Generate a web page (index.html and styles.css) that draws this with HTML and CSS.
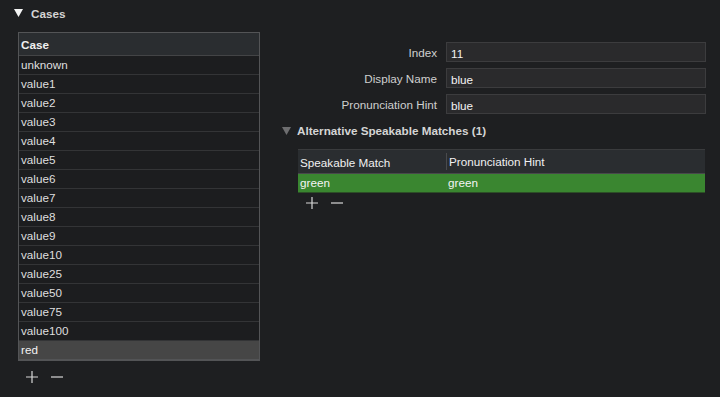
FILE: index.html
```html
<!DOCTYPE html>
<html>
<head>
<meta charset="utf-8">
<title>Cases</title>
<link rel="stylesheet" href="styles.css">
</head>
<body>

	<div class="section-title"><svg class="tri" width="9" height="8" viewBox="0 0 9 8"><path d="M0 0H9L4.5 8Z" fill="#f4f4f4"/></svg>Cases</div>

	<div class="panes">
		<div class="left">
			<div class="table cases">
				<div class="thead"><div class="cell">Case</div></div>
				<div class="row"><div class="cell">unknown</div></div>
				<div class="row"><div class="cell">value1</div></div>
				<div class="row"><div class="cell">value2</div></div>
				<div class="row"><div class="cell">value3</div></div>
				<div class="row"><div class="cell">value4</div></div>
				<div class="row"><div class="cell">value5</div></div>
				<div class="row"><div class="cell">value6</div></div>
				<div class="row"><div class="cell">value7</div></div>
				<div class="row"><div class="cell">value8</div></div>
				<div class="row"><div class="cell">value9</div></div>
				<div class="row"><div class="cell">value10</div></div>
				<div class="row"><div class="cell">value25</div></div>
				<div class="row"><div class="cell">value50</div></div>
				<div class="row"><div class="cell">value75</div></div>
				<div class="row"><div class="cell">value100</div></div>
				<div class="row selected"><div class="cell">red</div></div>
			</div>
			<div class="buttons">
				<svg width="14" height="14" viewBox="0 0 14 14"><path d="M7 1V13M1 7H13" stroke="#d8d8d8" stroke-width="1.2"/></svg>
				<svg width="14" height="14" viewBox="0 0 14 14"><path d="M1 7H13" stroke="#d8d8d8" stroke-width="1.2"/></svg>
			</div>
		</div>

		<div class="right">
			<div class="form">
				<label>Index</label><div class="field">11</div>
				<label>Display Name</label><div class="field">blue</div>
				<label>Pronunciation Hint</label><div class="field">blue</div>
			</div>

			<div class="sub-title"><svg class="tri dim" width="9" height="8" viewBox="0 0 9 8"><path d="M0 0H9L4.5 8Z" fill="#6e6e70"/></svg>Alternative Speakable Matches (1)</div>

			<div class="table matches">
				<div class="thead">
					<div class="cell">Speakable Match</div>
					<div class="cell sep">Pronunciation Hint</div>
				</div>
				<div class="row green">
					<div class="cell">green</div>
					<div class="cell">green</div>
				</div>
			</div>
			<div class="buttons small">
				<svg width="14" height="14" viewBox="0 0 14 14"><path d="M7 1V13M1 7H13" stroke="#d8d8d8" stroke-width="1.2"/></svg>
				<svg width="14" height="14" viewBox="0 0 14 14"><path d="M1 7H13" stroke="#d8d8d8" stroke-width="1.2"/></svg>
			</div>
		</div>
	</div>

</body>
</html>
```

FILE: styles.css
```css
body {
	margin: 0;
	width: 720px;
	height: 397px;
	background-color: #1e1f21;
	color: #dfdfdf;
	font-family: "Liberation Sans", Arial, sans-serif;
	font-size: 11.7px;
	overflow: hidden;
}

.section-title {
	display: flex;
	align-items: center;
	height: 14px;
	padding: 6px 0 0 14px;
	font-weight: bold;
	color: #d4d4d4;
}

.tri {
	margin-right: 8px;
}

.tri.dim {
	margin-right: 6px;
}

.panes {
	display: flex;
	padding-top: 12px;
}

.left {
	margin-left: 18px;
	width: 242px;
}

.table {
	box-sizing: border-box;
	border: 1px solid #535456;
	border-bottom-width: 2px;
}

.thead {
	display: flex;
	height: 22px;
	background-color: #2a2d30;
	border-bottom: 1px solid #434446;
	font-weight: bold;
	color: #f0f0f0;
}

.row {
	display: flex;
	height: 18px;
	background-color: #1c1d1f;
	border-bottom: 1px solid #333436;
}

.row:last-child {
	border-bottom: none;
}

.cell {
	display: flex;
	align-items: center;
	padding-left: 2px;
	padding-bottom: 1px;
	flex: 1;
}

.thead .cell {
	padding-top: 1px;
	padding-bottom: 0;
}

.row.selected {
	background-color: #464646;
	color: #f2f2f2;
}

.buttons {
	display: flex;
	gap: 11px;
	padding: 9px 0 0 7px;
}

.buttons.small {
	padding: 3px 0 0 25px;
}

.right {
	margin-left: 20px;
	width: 427px;
}

.form {
	display: grid;
	grid-template-columns: 157px 260px;
	column-gap: 9px;
	row-gap: 6px;
	padding-top: 10px;
}

.form label {
	text-align: right;
	align-self: center;
	color: #cfcfcf;
}

.field {
	box-sizing: border-box;
	height: 20px;
	padding: 4px 4px 0 4px;
	background-color: #2a2a2c;
	border: 1px solid #3c3c3e;
	color: #f2f2f2;
}

.sub-title {
	display: flex;
	align-items: center;
	padding: 10px 0 0 2px;
	font-weight: bold;
	color: #d4d4d4;
}

.matches {
	margin: 12px 0 0 18px;
	width: 407px;
	border: none;
	border-top: 1px solid #3a3b3d;
	border-bottom: 1px solid #2c4f26;
}

.matches .thead {
	font-weight: normal;
	height: 23px;
	border-bottom: 1px solid #48494b;
}

.matches .cell:first-child {
	flex: 0 0 146px;
}

.sep {
	border-left: 1px solid #4a4b4d;
	margin: 3px 0;
	padding-top: 0 !important;
}

.row.green {
	background-color: #3a8630;
	color: #f4f4f4;
	height: 18px;
}
```
